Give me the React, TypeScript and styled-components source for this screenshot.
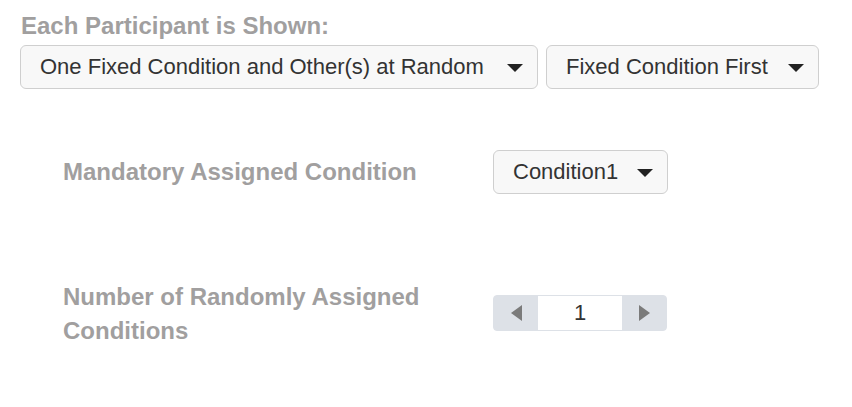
import React from "react";
import styled, { createGlobalStyle } from "styled-components";

const GlobalStyle = createGlobalStyle`
  body {
    margin: 0;
    background: #ffffff;
    font-family: "Liberation Sans", Arial, sans-serif;
  }
`;

const Page = styled.div`
  padding: 12px 20px 0 20px;
  width: 852px;
  height: 407px;
  box-sizing: border-box;
  font-family: "Liberation Sans", Arial, sans-serif;
`;

const Title = styled.div`
  font-size: 24px;
  font-weight: bold;
  line-height: 28px;
  color: #a19f9f;
  padding-left: 1px;
  margin-bottom: 5px;
`;

const SelectRow = styled.div`
  display: flex;
  gap: 8px;
`;

const Select = styled.div<{ $width: number }>`
  display: flex;
  align-items: center;
  justify-content: space-between;
  box-sizing: border-box;
  width: ${(props) => props.$width}px;
  height: 44px;
  padding: 0 14px 0 19px;
  border: 1px solid #cfcfcf;
  border-radius: 6px;
  background: #f8f8f8;
  color: #333333;
  font-size: 22px;
  white-space: nowrap;
`;

const Caret = styled.span`
  width: 0;
  height: 0;
  border-left: 8px solid transparent;
  border-right: 8px solid transparent;
  border-top: 8px solid #222222;
  margin-left: 16px;
  margin-top: 1px;
`;

const Settings = styled.div`
  margin-left: 43px;
  margin-top: 61px;
  display: flex;
  flex-direction: column;
  gap: 86px;
`;

const SettingRow = styled.div<{ $align: string }>`
  display: flex;
  align-items: ${(props) => props.$align};
`;

const Label = styled.div`
  width: 430px;
  flex-shrink: 0;
  font-size: 24px;
  font-weight: bold;
  line-height: 34px;
  color: #a19f9f;
`;

const Stepper = styled.div`
  display: flex;
  box-sizing: border-box;
  width: 174px;
  height: 36px;
  margin-top: 15px;
  border: 1px solid #dde1e7;
  border-radius: 4px;
  overflow: hidden;
  background: #dde1e7;
`;

const StepButton = styled.div<{ $dir: "left" | "right" }>`
  width: 44px;
  display: flex;
  align-items: center;
  justify-content: center;
  &::before {
    content: "";
    width: 0;
    height: 0;
    border-top: 8px solid transparent;
    border-bottom: 8px solid transparent;
    ${(props) =>
      props.$dir === "left"
        ? "border-right: 11px solid #7b7b7b;"
        : "border-left: 11px solid #7b7b7b;"}
  }
`;

const StepValue = styled.div`
  flex: 1;
  background: #ffffff;
  display: flex;
  align-items: center;
  justify-content: center;
  font-size: 22px;
  color: #333333;
`;

const App: React.FC = () => {
  return (
    <Page>
      <GlobalStyle />
      <Title>Each Participant is Shown:</Title>
      <SelectRow>
        <Select $width={518}>
          One Fixed Condition and Other(s) at Random
          <Caret />
        </Select>
        <Select $width={273}>
          Fixed Condition First
          <Caret />
        </Select>
      </SelectRow>
      <Settings>
        <SettingRow $align="center">
          <Label>Mandatory Assigned Condition</Label>
          <Select $width={175}>
            Condition1
            <Caret />
          </Select>
        </SettingRow>
        <SettingRow $align="flex-start">
          <Label>
            Number of Randomly Assigned
            <br />
            Conditions
          </Label>
          <Stepper>
            <StepButton $dir="left" />
            <StepValue>1</StepValue>
            <StepButton $dir="right" />
          </Stepper>
        </SettingRow>
      </Settings>
    </Page>
  );
};

export default App;
